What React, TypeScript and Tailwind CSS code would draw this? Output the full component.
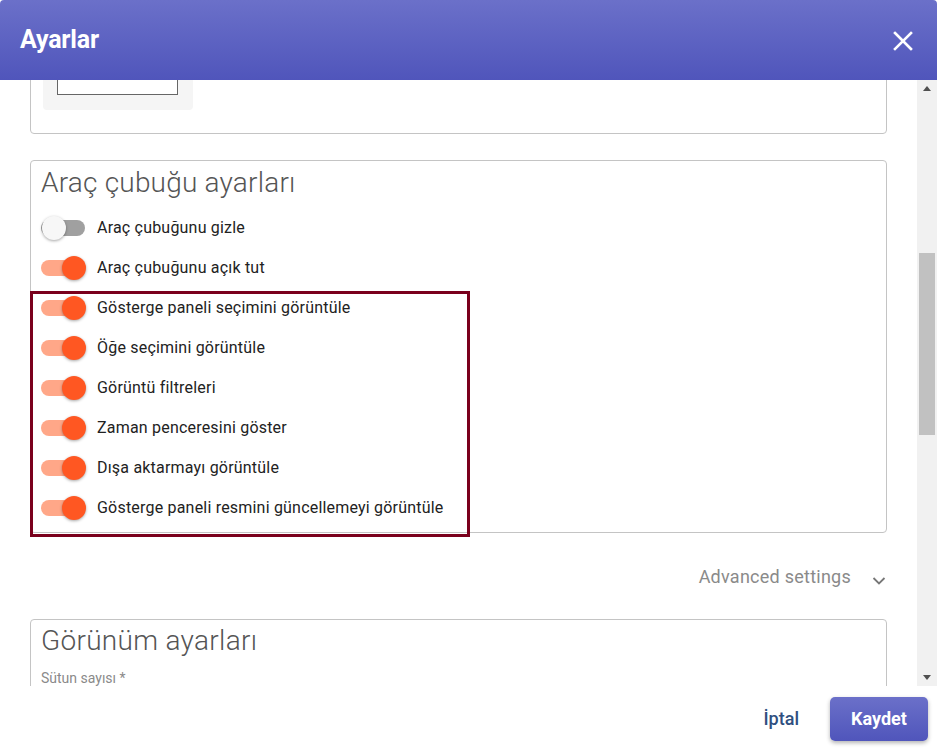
import React from 'react';

const toggles = [
  { label: 'Araç çubuğunu gizle', on: false },
  { label: 'Araç çubuğunu açık tut', on: true },
  { label: 'Gösterge paneli seçimini görüntüle', on: true },
  { label: 'Öğe seçimini görüntüle', on: true },
  { label: 'Görüntü filtreleri', on: true },
  { label: 'Zaman penceresini göster', on: true },
  { label: 'Dışa aktarmayı görüntüle', on: true },
  { label: 'Gösterge paneli resmini güncellemeyi görüntüle', on: true },
];

const Toggle = ({ on }: { on: boolean }) => (
  <div className="relative w-[46px] h-[24px] flex items-center">
    <div className={`w-[44px] h-[16px] rounded-full ${on ? 'bg-[#ffa788]' : 'bg-[#a0a0a0]'}`} />
    <div
      className={`absolute top-0 w-[24px] h-[24px] rounded-full shadow-[0_1px_3px_rgba(0,0,0,0.35)] ${
        on ? 'left-[21px] bg-[#ff5722]' : 'left-[1px] bg-[#f7f7f7]'
      }`}
    />
  </div>
);

const App = () => {
  return (
    <div className="w-[937px] h-[751px] flex flex-col bg-white overflow-hidden font-['Roboto',sans-serif]">
      {/* header */}
      <div className="h-[80px] shrink-0 flex items-center justify-between pl-[20px] pr-[24px] bg-gradient-to-b from-[#6b70c9] to-[#5055bb] rounded-t-[4px]">
        <h1 className="text-white text-[25px] font-bold tracking-[-0.2px]">Ayarlar</h1>
        <svg width="20" height="20" viewBox="0 0 20 20" className="mt-[1px]">
          <path d="M2 2 L18 18 M18 2 L2 18" stroke="white" strokeWidth="2.6" strokeLinecap="square" />
        </svg>
      </div>

      {/* body */}
      <div className="h-[606px] shrink-0 flex">
        <div className="flex-1 overflow-hidden pl-[30px] pr-[30px]">
          {/* partly scrolled card */}
          <div className="-mt-[113px] border border-[#c4c4c4] rounded-[4px] pt-[12px] pb-[23px] px-[12px]">
            <div className="w-[150px] h-[130px] bg-[#f5f5f5] rounded-[4px] flex items-end px-[14px] pb-[15px]">
              <div className="w-[121px] h-[50px] bg-white border border-[#666]" />
            </div>
          </div>

          {/* toolbar settings */}
          <div className="relative mt-[26px] border border-[#c4c4c4] rounded-[4px] pt-[5px] pb-[4px] px-[10px]">
            <h2 className="text-[28px] leading-[34px] font-light text-[#555] tracking-[0.2px]">Araç çubuğu ayarları</h2>
            <div className="mt-[8px] flex flex-col">
              {toggles.map((t) => (
                <div key={t.label} className="h-[40px] flex items-center gap-[10px]">
                  <Toggle on={t.on} />
                  <span className="text-[16px] tracking-[0.2px] text-[#222]">{t.label}</span>
                </div>
              ))}
            </div>
            <div className="absolute left-[-1px] top-[130px] w-[440px] h-[246px] border-[3px] border-[#7a001c] pointer-events-none" />
          </div>

          {/* advanced */}
          <div className="h-[86px] flex items-center justify-end pr-[1px] pt-[1px]">
            <span className="text-[18px] text-[#8a8a8a] tracking-[0.25px]">Advanced settings</span>
            <svg width="14" height="10" viewBox="0 0 14 10" className="ml-[21px] mt-[8px]">
              <path d="M1.5 2 L7 7.5 L12.5 2" fill="none" stroke="#777" strokeWidth="1.8" />
            </svg>
          </div>

          {/* appearance */}
          <div className="border border-[#c4c4c4] rounded-[4px] pt-[4px] px-[10px] h-[120px]">
            <h2 className="text-[28px] leading-[34px] font-light text-[#555] tracking-[0.3px]">Görünüm ayarları</h2>
            <div className="mt-[11px] text-[14px] leading-[18px] text-[#8a8a8a]">Sütun sayısı *</div>
          </div>
        </div>

        {/* scrollbar */}
        <div className="w-[20px] shrink-0 bg-[#f1f1f1] flex flex-col items-center">
          <div className="h-[17px] flex items-center justify-center">
            <div className="w-0 h-0 border-l-[4px] border-r-[4px] border-b-[5px] border-l-transparent border-r-transparent border-b-[#505050]" />
          </div>
          <div className="flex-1 w-full px-[2px]">
            <div className="mt-[156px] h-[182px] bg-[#c1c1c1]" />
          </div>
          <div className="h-[17px] flex items-center justify-center">
            <div className="w-0 h-0 border-l-[4px] border-r-[4px] border-t-[5px] border-l-transparent border-r-transparent border-t-[#505050]" />
          </div>
        </div>
      </div>

      {/* footer */}
      <div className="flex-1 flex items-center justify-end pr-[9px] gap-[31px]">
        <button className="text-[18px] font-medium text-[#2f4f7f]">İptal</button>
        <button className="w-[98px] h-[44px] rounded-[5px] bg-gradient-to-b from-[#6b70c9] to-[#5055bb] text-white text-[18px] font-bold shadow-[0_2px_4px_rgba(0,0,0,0.3)]">
          Kaydet
        </button>
      </div>
    </div>
  );
};

export default App;
